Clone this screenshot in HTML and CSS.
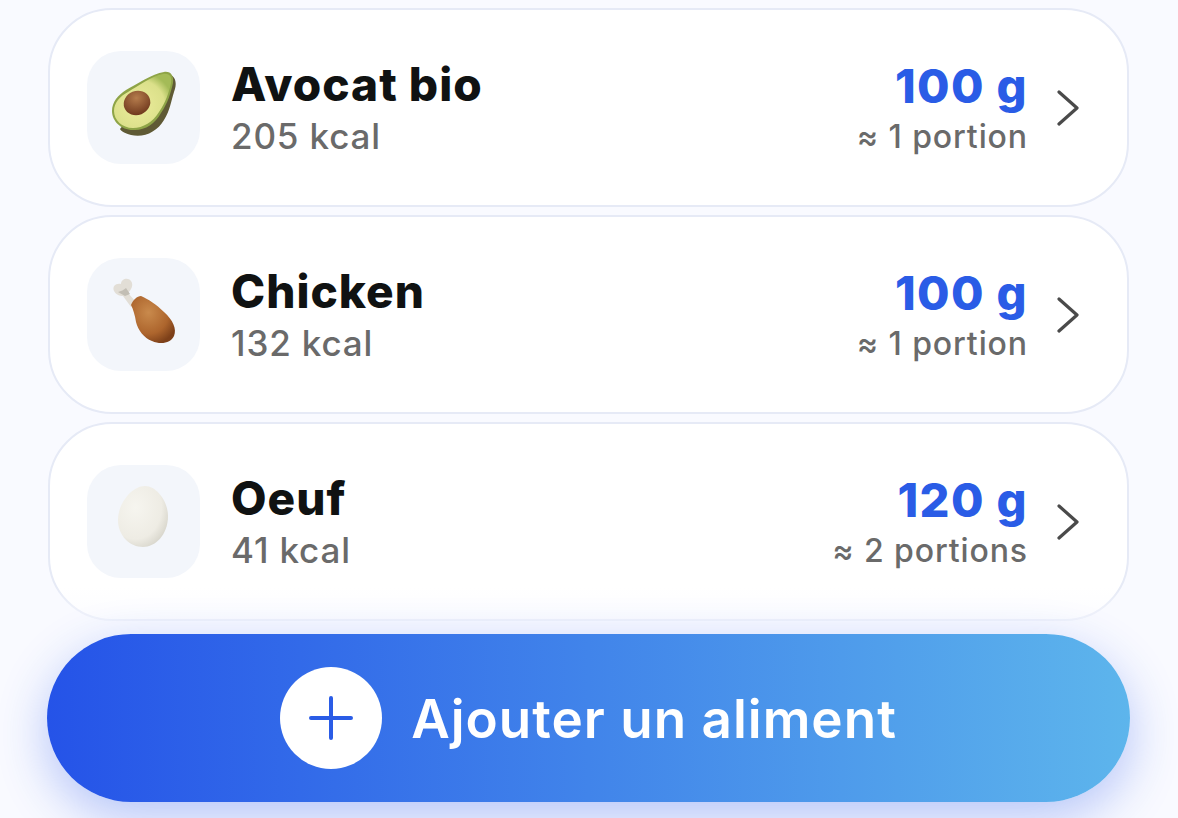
FILE: index.html
```html
<!DOCTYPE html>
<html lang="fr">
<head>
    <meta charset="UTF-8">
    <meta name="viewport" content="width=device-width, initial-scale=1.0">
    <title>Aliments</title>
    <link rel="stylesheet" href="styles.css">
</head>
<body>
    <div class="container">
        <ul class="food-list">
            <li class="food-card">
                <div class="food-icon">
                    <svg viewBox="0 0 113 113" width="113" height="113">
                        <defs>
                            <radialGradient id="avoFlesh" cx="42%" cy="58%" r="62%">
                                <stop offset="0" stop-color="#ecec9c"/>
                                <stop offset="0.75" stop-color="#dbe08a"/>
                                <stop offset="1" stop-color="#a4bb57"/>
                            </radialGradient>
                            <radialGradient id="avoSeed" cx="55%" cy="30%" r="75%">
                                <stop offset="0" stop-color="#b57c4c"/>
                                <stop offset="1" stop-color="#6b341a"/>
                            </radialGradient>
                        </defs>
                        <path d="M84 24C89 27 90 33 87 41C84 50 83 60 77 69C70 81 57 87 44 84C37 82 34 80 33 78L60 45Z" fill="#5f5a35"/>
                        <path d="M77 21C84 20 87 25 86 32C84 41 81 52 74 62C68 73 57 80 46 79C34 79 25 70 25 60C25 51 31 44 39 39C50 33 65 23 77 21Z" fill="#8ea447"/>
                        <path d="M76 23C83 22 85 26 84 32C82 41 79 51 72 61C66 71 56 77 46 77C35 77 27 69 27 60C27 52 33 45 41 41C51 35 65 25 76 23Z" fill="url(#avoFlesh)"/>
                        <ellipse cx="50" cy="52" rx="13.5" ry="12" transform="rotate(-22 50 52)" fill="url(#avoSeed)"/>
                    </svg>
                </div>
                <div class="food-info">
                    <span class="food-name">Avocat bio</span>
                    <span class="food-kcal">205 kcal</span>
                </div>
                <div class="food-amount">
                    <span class="food-qty">100 g</span>
                    <span class="food-portion">≈ 1 portion</span>
                </div>
                <svg class="chevron" viewBox="0 0 24 36" width="24" height="36"><path d="M3 2L21 18L3 34"/></svg>
            </li>
            <li class="food-card">
                <div class="food-icon">
                    <svg viewBox="0 0 113 113" width="113" height="113">
                        <defs>
                            <radialGradient id="meat" cx="40%" cy="35%" r="70%">
                                <stop offset="0" stop-color="#c98a4c"/>
                                <stop offset="0.65" stop-color="#ad652d"/>
                                <stop offset="1" stop-color="#7d4019"/>
                            </radialGradient>
                        </defs>
                        <path d="M27 33C25 28 29 25 34 26C34 21 41 19 44 23C47 27 44 32 41 35L49 44L44 49L36 38C33 38 29 37 27 33Z" fill="#e2ded6"/>
                        <path d="M31 34C34 33 37 32 39 30L43 36L38 38Z" fill="#c2beb4"/>
                        <path d="M44 47C46 42 50 38 54 38C61 41 69 46 77 54C86 62 90 71 87 78C84 85 74 87 65 83C57 80 51 72 49 64C48 57 46 51 44 47Z" fill="url(#meat)"/>
                    </svg>
                </div>
                <div class="food-info">
                    <span class="food-name">Chicken</span>
                    <span class="food-kcal">132 kcal</span>
                </div>
                <div class="food-amount">
                    <span class="food-qty">100 g</span>
                    <span class="food-portion">≈ 1 portion</span>
                </div>
                <svg class="chevron" viewBox="0 0 24 36" width="24" height="36"><path d="M3 2L21 18L3 34"/></svg>
            </li>
            <li class="food-card">
                <div class="food-icon">
                    <svg viewBox="0 0 113 113" width="113" height="113">
                        <defs>
                            <radialGradient id="egg" cx="35%" cy="35%" r="80%">
                                <stop offset="0" stop-color="#f6f5ef"/>
                                <stop offset="0.65" stop-color="#eeece4"/>
                                <stop offset="1" stop-color="#cfcdc2"/>
                            </radialGradient>
                        </defs>
                        <path d="M58 21C70 21 81 37 81 51C81 70 68 82 56 82C43 82 31 71 31 55C31 38 45 21 58 21Z" fill="url(#egg)"/>
                    </svg>
                </div>
                <div class="food-info">
                    <span class="food-name">Oeuf</span>
                    <span class="food-kcal">41 kcal</span>
                </div>
                <div class="food-amount">
                    <span class="food-qty">120 g</span>
                    <span class="food-portion">≈ 2 portions</span>
                </div>
                <svg class="chevron" viewBox="0 0 24 36" width="24" height="36"><path d="M3 2L21 18L3 34"/></svg>
            </li>
        </ul>
        <div class="footer">
            <button class="add-button">
                <span class="add-circle">
                    <svg viewBox="0 0 44 44" width="44" height="44"><path d="M22 2V42M2 22H42"/></svg>
                </span>
                <span class="add-label">Ajouter un aliment</span>
            </button>
        </div>
    </div>
</body>
</html>
```

FILE: styles.css
```css
html, body {
    margin: 0;
    padding: 0;
    height: 100%;
}

body {
    font-family: Inter, "Liberation Sans", sans-serif;
    background-color: #f9faff;
    overflow: hidden;
}

.container {
    padding: 8px 48px 0 47px;
}

.food-list {
    list-style: none;
    margin: 0;
    padding: 0 1px;
    display: flex;
    flex-direction: column;
    gap: 8px;
}

.food-card {
    display: flex;
    align-items: center;
    height: 199px;
    box-sizing: border-box;
    padding: 0 47px 0 37px;
    background-color: #ffffff;
    border: 2px solid #e6eaf6;
    border-radius: 64px;
}

.food-icon {
    width: 113px;
    height: 113px;
    flex-shrink: 0;
    background-color: #f3f6fb;
    border-radius: 34px;
}

.food-icon svg {
    display: block;
}

.food-info {
    flex: 1;
    display: flex;
    flex-direction: column;
    margin-left: 31px;
    padding-top: 4px;
}

.food-name {
    font-size: 46px;
    line-height: 53px;
    font-weight: 800;
    letter-spacing: 1px;
    color: #101212;
}

.food-kcal {
    font-size: 35px;
    line-height: 50px;
    font-weight: 500;
    letter-spacing: 0.85px;
    color: #6a6a6a;
}

.food-amount {
    display: flex;
    flex-direction: column;
    align-items: flex-end;
    padding-top: 6px;
}

.food-qty {
    font-size: 47px;
    line-height: 52px;
    font-weight: 800;
    letter-spacing: 1.4px;
    color: #2a5ce6;
}

.food-portion {
    font-size: 32px;
    line-height: 50px;
    font-weight: 500;
    letter-spacing: 0.9px;
    color: #6a6a6a;
}

.chevron {
    flex-shrink: 0;
    margin-left: 28px;
    fill: none;
    stroke: #4a4a4a;
    stroke-width: 3.2;
    stroke-linecap: round;
    stroke-linejoin: round;
}

.footer {
    position: relative;
    margin-top: 13px;
}

/* fade over the bottom of the last card */
.footer::before {
    content: "";
    position: absolute;
    left: -47px;
    right: -48px;
    top: -47px;
    height: 47px;
    background: linear-gradient(to bottom, rgba(249, 250, 255, 0), rgba(249, 250, 255, 0.8));
}

.add-button {
    position: relative;
    display: flex;
    align-items: center;
    justify-content: center;
    gap: 29px;
    width: 100%;
    height: 168px;
    border: none;
    border-radius: 84px;
    padding: 0;
    background: linear-gradient(to right, #2553e8, #5db5ec);
    box-shadow: 0 16px 50px rgba(37, 83, 232, 0.32);
    color: #ffffff;
    font-family: inherit;
    font-size: 53px;
    font-weight: 600;
    letter-spacing: 1px;
    cursor: pointer;
}

.add-label {
    padding-top: 2px;
}

.add-circle {
    display: flex;
    align-items: center;
    justify-content: center;
    width: 102px;
    height: 102px;
    border-radius: 50%;
    background-color: #ffffff;
}

.add-circle svg {
    fill: none;
    stroke: #2a5ce6;
    stroke-width: 4;
    stroke-linecap: round;
}
```
